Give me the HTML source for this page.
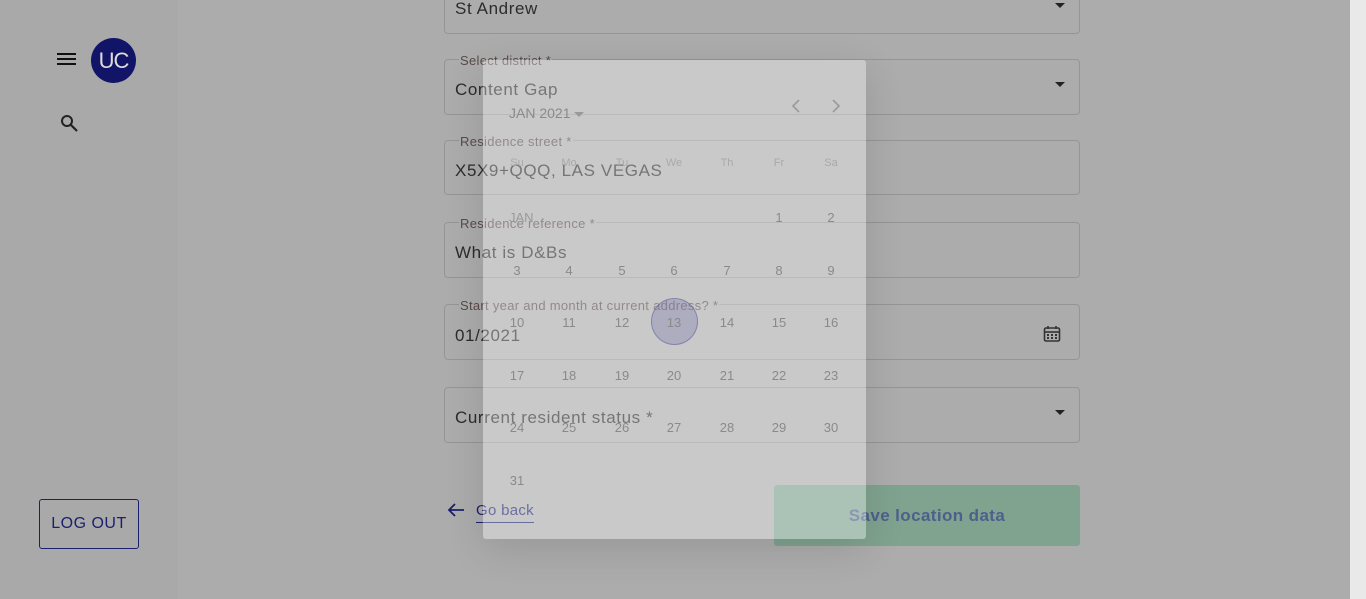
<!DOCTYPE html>
<html><head><style>
*{margin:0;padding:0;box-sizing:border-box}
body{width:1366px;height:599px;overflow:hidden;background:#acacac;font-family:"Liberation Sans",sans-serif;position:relative}
.side{position:absolute;left:0;top:0;width:178px;height:599px;background:#a9a9a9}
.sb{position:absolute;left:1350px;top:0;width:16px;height:599px;background:#e9e9e9}
.f{position:absolute;left:444px;width:636px;border:1px solid #959595;border-radius:4px}
.lbl{position:absolute;left:14px;top:-6px;font-size:13px;color:#5a4a4a;background:#acacac;padding:0 1px;line-height:13px;letter-spacing:.3px}
.val{position:absolute;left:10px;font-size:17px;color:#2c2c2c;letter-spacing:.6px}
.arr{position:absolute;right:14px;width:0;height:0;border-left:5px solid transparent;border-right:5px solid transparent;border-top:5px solid #222}
.pop{position:absolute;left:483px;top:60px;width:383px;height:479px;background:rgba(255,255,255,.35);border-radius:3px;box-shadow:0 10px 40px rgba(0,0,0,.12)}
.c{position:absolute;width:40px;text-align:center;font-size:13px;color:#8a8a8a;margin-left:-20px}
.w{font-size:11px;color:#a9a9a9}
</style></head><body>
<div class="side"></div>
<div class="sb"></div>
<svg style="position:absolute;left:57px;top:52px" width="20" height="16"><rect x="0" y="1" width="19" height="2" fill="#111"/><rect x="0" y="6" width="19" height="2" fill="#111"/><rect x="0" y="11" width="19" height="2" fill="#111"/></svg>
<div style="position:absolute;left:91px;top:38px;width:45px;height:45px;border-radius:50%;background:#111467;color:#ddd;font-size:22px;line-height:45px;text-align:center;letter-spacing:-1px">UC</div>
<svg style="position:absolute;left:60px;top:114px" width="18" height="18"><circle cx="7" cy="7" r="5" stroke="#222" stroke-width="2" fill="none"/><line x1="11" y1="11" x2="17" y2="17" stroke="#222" stroke-width="2.2"/></svg>
<div style="position:absolute;left:39px;top:499px;width:100px;height:50px;border:1px solid #1a1f6e;border-radius:3px;color:#1a1f6e;font-size:16px;line-height:48px;text-align:center;letter-spacing:.5px">LOG OUT</div>

<div class="f" style="top:-20px;height:54px"><div class="val" style="top:18px">St Andrew</div><div class="arr" style="top:22px"></div></div>
<div class="f" style="top:59px;height:56px"><div class="lbl">Select district *</div><div class="val" style="top:20px">Content Gap</div><div class="arr" style="top:22px"></div></div>
<div class="f" style="top:140px;height:55px"><div class="lbl">Residence street *</div><div class="val" style="top:20px">X5X9+QQQ, LAS VEGAS</div></div>
<div class="f" style="top:222px;height:56px"><div class="lbl">Residence reference *</div><div class="val" style="top:20px">What is D&amp;Bs</div></div>
<div class="f" style="top:304px;height:56px"><div class="lbl">Start year and month at current address? *</div><div class="val" style="top:21px">01/2021</div>
<svg style="position:absolute;left:598px;top:20px" width="18" height="18"><rect x="1.5" y="3" width="15" height="13" rx="1.5" stroke="#333" stroke-width="1.6" fill="none"/><line x1="2" y1="7" x2="16" y2="7" stroke="#333" stroke-width="1.6"/><line x1="5" y1="1" x2="5" y2="4" stroke="#333" stroke-width="1.6"/><line x1="13" y1="1" x2="13" y2="4" stroke="#333" stroke-width="1.6"/><g fill="#333"><rect x="4" y="9" width="2" height="2"/><rect x="8" y="9" width="2" height="2"/><rect x="12" y="9" width="2" height="2"/><rect x="4" y="12" width="2" height="2"/><rect x="8" y="12" width="2" height="2"/><rect x="12" y="12" width="2" height="2"/></g></svg></div>
<div class="f" style="top:387px;height:56px"><div class="val" style="top:20px">Current resident status *</div><div class="arr" style="top:22px"></div></div>

<svg style="position:absolute;left:447px;top:502px" width="18" height="16"><path d="M17 8H2M8 2L2 8l6 6" stroke="#1a1f6e" stroke-width="1.8" fill="none"/></svg>
<div style="position:absolute;left:476px;top:502px;font-size:15px;color:#1a1f6e;border-bottom:1px solid #1a1f6e;padding-bottom:3px;letter-spacing:.3px">Go back</div>
<div style="position:absolute;left:774px;top:485px;width:306px;height:61px;background:#7fa38f;border-radius:3px;color:#4f5f8c;font-size:17px;font-weight:bold;line-height:61px;text-align:center;letter-spacing:.4px">Save location data</div>

<div class="pop">
<div style="position:absolute;left:26px;top:45px;font-size:14px;color:#8a8a8a">JAN 2021 <span style="display:inline-block;border-left:5px solid transparent;border-right:5px solid transparent;border-top:5px solid #999;vertical-align:middle"></span></div>
<svg style="position:absolute;left:307px;top:39px" width="12" height="14"><path d="M9 1L3 7l6 6" stroke="#9a9a9a" stroke-width="1.6" fill="none"/></svg>
<svg style="position:absolute;left:347px;top:39px" width="12" height="14"><path d="M3 1l6 6-6 6" stroke="#9a9a9a" stroke-width="1.6" fill="none"/></svg>
<div style="position:absolute;left:168px;top:238px;width:47px;height:47px;border-radius:50%;background:rgba(110,110,170,.3);border:1px solid rgba(90,90,150,.5)"></div>
<div style="position:absolute;left:26px;top:150px;font-size:13px;color:#9a9a9a">JAN</div>
<div id="g"></div>
</div>
<script>
var xs=[34,86,139,191,244,296,348],g=document.getElementById('g'),h='';
['Su','Mo','Tu','We','Th','Fr','Sa'].forEach((d,i)=>h+='<div class="c w" style="left:'+xs[i]+'px;top:97px">'+d+'</div>');
var ys=[149,202,254,307,359,412];
for(var d=1;d<=31;d++){var p=d+4,r=Math.floor(p/7),c=p%7;h+='<div class="c" style="left:'+xs[c]+'px;top:'+(ys[r]+1)+'px">'+d+'</div>';}
g.innerHTML=h;
</script>
</body></html>
